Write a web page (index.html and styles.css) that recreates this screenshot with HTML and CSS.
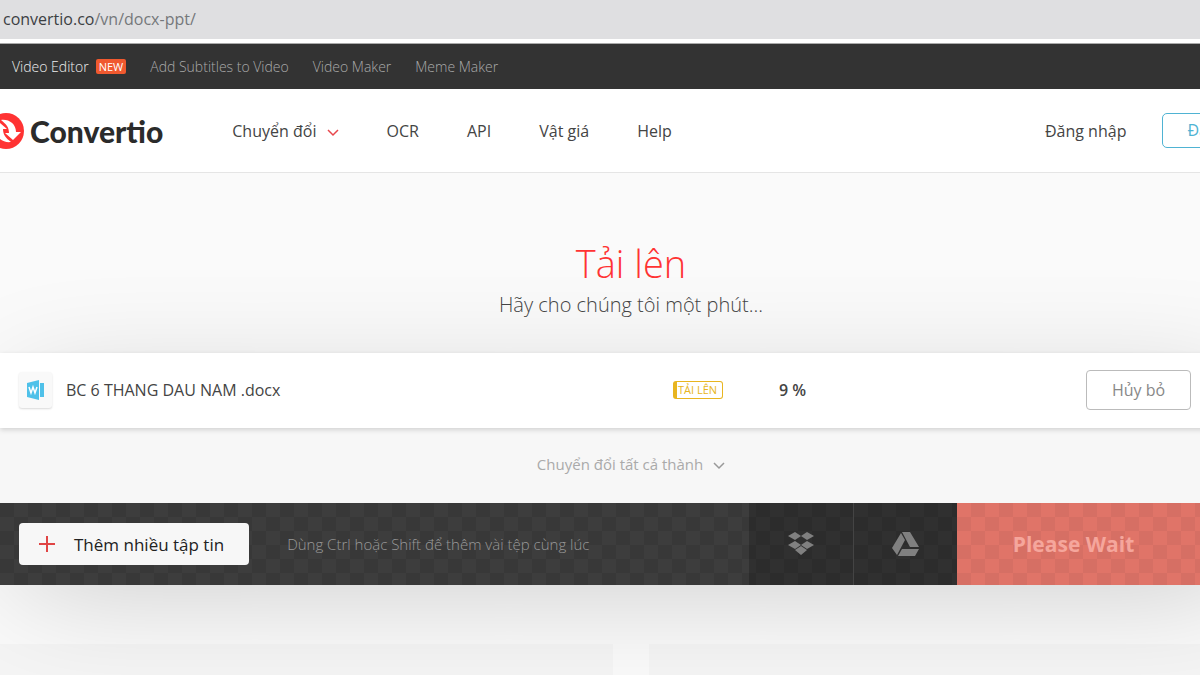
FILE: index.html
```html
<!DOCTYPE html>
<html lang="vi">
<head>
    <meta charset="UTF-8">
    <meta name="viewport" content="width=device-width, initial-scale=1.0">
    <title>DOCX PPT - Convertio</title>
    <link rel="stylesheet" href="styles.css">
</head>
<body>
    <div class="address-bar">convertio.co<span class="path">/vn/docx-ppt/</span></div>

    <nav class="top-bar">
        <a href="#" class="active">Video Editor <span class="new">NEW</span></a>
        <a href="#">Add Subtitles to Video</a>
        <a href="#">Video Maker</a>
        <a href="#">Meme Maker</a>
    </nav>

    <div class="site">
        <header class="header">
            <a href="#" class="logo">
                <svg width="36" height="36" viewBox="0 0 36 36" aria-hidden="true">
                    <circle cx="18" cy="18" r="18" fill="#ff3333"/>
                    <path d="M13 7c8-1 15 4 15 12h5l-8 8-8-7h4c0-6-3-9-8-13z" fill="#fff"/>
                    <path d="M23 29c-8 1-15-4-15-12H3l8-8 8 7h-4c0 6 3 9 8 13z" fill="#fff"/>
                </svg>
                <span>Convertio</span>
            </a>
            <nav class="menu">
                <a href="#">Chuyển đổi
                    <svg class="arrow" width="12" height="8" viewBox="0 0 12 8" aria-hidden="true"><path d="M1 1l5 5 5-5"/></svg>
                </a>
                <a href="#">OCR</a>
                <a href="#">API</a>
                <a href="#">Vật giá</a>
                <a href="#">Help</a>
            </nav>
            <div class="account">
                <a href="#">Đăng nhập</a>
                <a href="#" class="signup">Đăng ký</a>
            </div>
        </header>

        <main>
            <section class="hero">
                <h1>Tải lên</h1>
                <p>Hãy cho chúng tôi một phút...</p>
            </section>

            <section class="converter">
                <div class="file-row">
                    <span class="file-icon">
                        <svg width="18" height="20" viewBox="0 0 18 20" aria-hidden="true">
                            <path d="M0 3l12-3v20L0 17z" fill="#4fc1e9"/>
                            <path d="M13 3h4v14h-4z" fill="#4fc1e9"/>
                            <path d="M2 7l2 6 2-6 2 6 2-6" fill="none" stroke="#fff" stroke-width="1.5"/>
                        </svg>
                    </span>
                    <span class="file-name">BC 6 THANG DAU NAM .docx</span>
                    <span class="status">TẢI LÊN</span>
                    <span class="percent">9 %</span>
                    <button type="button" class="cancel">Hủy bỏ</button>
                </div>

                <div class="convert-all">
                    <button type="button">Chuyển đổi tất cả thành
                        <svg class="arrow" width="12" height="8" viewBox="0 0 12 8" aria-hidden="true"><path d="M1 1l5 5 5-5"/></svg>
                    </button>
                </div>

                <div class="actions">
                    <div class="add">
                        <button type="button" class="add-files">
                            <svg width="18" height="18" viewBox="0 0 18 18" aria-hidden="true"><path d="M9 1v16M1 9h16"/></svg>
                            Thêm nhiều tập tin
                        </button>
                        <span class="hint">Dùng Ctrl hoặc Shift để thêm vài tệp cùng lúc</span>
                    </div>
                    <button type="button" class="cloud" aria-label="Dropbox">
                        <svg width="26" height="24" viewBox="0 0 26 24" aria-hidden="true">
                            <path d="M7 0l6 4-6 4-7-4zM19 0l7 4-7 4-6-4zM7 9l6 4-6 4-7-4zM19 9l7 4-7 4-6-4zM13 14l6 4-6 5-6-5z"/>
                        </svg>
                    </button>
                    <button type="button" class="cloud" aria-label="Google Drive">
                        <svg width="28" height="24" viewBox="0 0 28 24" aria-hidden="true">
                            <path d="M9 1l4 7-8 15-5-7zM10 0h8l9 15h-9zM10 17h17l-4 7H6z"/>
                        </svg>
                    </button>
                    <button type="button" class="convert">Please Wait</button>
                </div>
            </section>

            <div class="blocks">
                <div></div>
                <div></div>
            </div>
        </main>
    </div>
</body>
</html>
```

FILE: styles.css
```css
* {
    box-sizing: border-box;
}
body {
    margin: 0;
    font-family: "Open Sans", "Noto Sans", sans-serif;
    font-size: 16px;
    color: #444;
    background-color: #fafafa;
    overflow: hidden;
}
a {
    color: inherit;
    text-decoration: none;
}
button {
    font-family: inherit;
    border: none;
    cursor: pointer;
}
.address-bar {
    height: 43px;
    padding: 0 3px;
    line-height: 39px;
    color: #3c4043;
    background-color: #dfdfe1;
    border-bottom: 4px solid #fff;
}
.address-bar .path {
    color: #75787b;
}
.top-bar {
    display: flex;
    align-items: center;
    gap: 24px;
    height: 46px;
    padding: 0 12px;
    font-size: 14px;
    font-weight: 300;
    color: #aaa;
    background-color: #333;
    border-top: 1px solid #aaa;
}
.top-bar .active {
    display: flex;
    align-items: center;
    gap: 7px;
    color: #eee;
}
.new {
    padding: 0 3px;
    font-size: 11px;
    font-weight: 400;
    line-height: 15px;
    color: #fff;
    background-color: #f0592f;
    border-radius: 2px;
}
/* the page is a bit wider than the window */
.site {
    margin-right: -62px;
}
.header {
    display: flex;
    align-items: center;
    height: 84px;
    background-color: #fff;
    border-bottom: 1px solid #e5e5e5;
}
.logo {
    display: flex;
    align-items: center;
    gap: 6px;
    margin-left: -12px;
    font-family: Lato, sans-serif;
    font-size: 30px;
    font-weight: 900;
    line-height: 36px;
    color: #2b2b2b;
}
.menu {
    display: flex;
    gap: 48px;
    margin-left: 69px;
}
.arrow {
    margin-left: 6px;
    fill: none;
    stroke: #e8474c;
    stroke-width: 1.5;
}
.account {
    display: flex;
    align-items: center;
    gap: 36px;
    margin-left: auto;
}
.signup {
    padding: 0 14px 0 24px;
    line-height: 33px;
    color: #4fb3d3;
    border: 1px solid #4fb3d3;
    border-radius: 5px;
}
.hero {
    height: 180px;
    padding-top: 60px;
    text-align: center;
}
.hero h1 {
    margin: 0;
    font-size: 38px;
    font-weight: 300;
    line-height: 60px;
    color: #f33;
}
.hero p {
    margin: 0;
    font-size: 20px;
    font-weight: 300;
    line-height: 24px;
    color: #444;
}
.converter {
    background-color: #f7f7f7;
    box-shadow: 0 20px 120px -20px rgba(0,0,0,0.2);
}
.file-row {
    display: grid;
    grid-template-columns: 33px 607px 106px 1fr 105px;
    align-items: center;
    height: 75px;
    padding: 0 71px 2px 19px;
    background-color: #fff;
    box-shadow: 0 2px 5px rgba(0,0,0,0.15);
}
.file-icon {
    display: flex;
    align-items: center;
    justify-content: center;
    height: 36px;
    background-color: #f9f9f9;
    border-radius: 3px;
    box-shadow: 0 1px 2px rgba(0,0,0,0.15);
}
.file-name {
    padding-left: 14px;
}
.status {
    justify-self: start;
    margin-left: 14px;
    padding: 0 5px 0 1px;
    font-size: 11px;
    line-height: 16px;
    color: #e8b520;
    border: 1px solid #e8b520;
    border-left-width: 4px;
    border-radius: 3px;
}
.percent {
    padding-left: 14px;
    font-weight: 600;
}
.cancel {
    height: 40px;
    font-size: 16px;
    color: #888;
    background-color: #fff;
    border: 1px solid #bbb;
    border-radius: 4px;
}
.convert-all {
    display: flex;
    align-items: center;
    justify-content: center;
    height: 75px;
    padding-bottom: 4px;
}
.convert-all button {
    padding: 0;
    font-size: 15px;
    color: #aaa;
    background: none;
}
.convert-all .arrow {
    stroke: #999;
}
.actions {
    display: flex;
    height: 82px;
    background: repeating-conic-gradient(#3d3d3d 0 25%, #383838 0 50%) 0 0 / 28px 28px;
}
.add {
    display: flex;
    flex: 1;
    align-items: center;
    gap: 38px;
    padding-left: 19px;
}
.add-files {
    display: flex;
    align-items: center;
    gap: 18px;
    height: 42px;
    padding: 0 25px 0 19px;
    font-size: 17px;
    font-weight: 500;
    color: #222;
    background-color: #f7f7f7;
    border-radius: 4px;
}
.add-files svg {
    stroke: #e04545;
    stroke-width: 2;
}
.hint {
    font-size: 15px;
    font-weight: 300;
    color: #999;
}
.cloud {
    display: flex;
    align-items: center;
    justify-content: center;
    width: 104px;
    background-color: rgba(0,0,0,0.2);
}
.cloud + .cloud {
    border-left: 1px solid #444;
}
.cloud svg {
    fill: #808080;
}
.convert {
    width: 305px;
    padding: 0 72px 0 0;
    font-size: 21px;
    font-weight: 700;
    color: #f5a69c;
    background: repeating-conic-gradient(#d66f64 0 25%, #e07468 0 50%) 0 0 / 28px 28px;
}
.blocks {
    display: grid;
    grid-template-columns: 1fr 1fr;
    gap: 36px;
    margin-top: 59px;
}
.blocks div {
    height: 300px;
    background-color: rgba(0,0,0,0.02);
}
```
